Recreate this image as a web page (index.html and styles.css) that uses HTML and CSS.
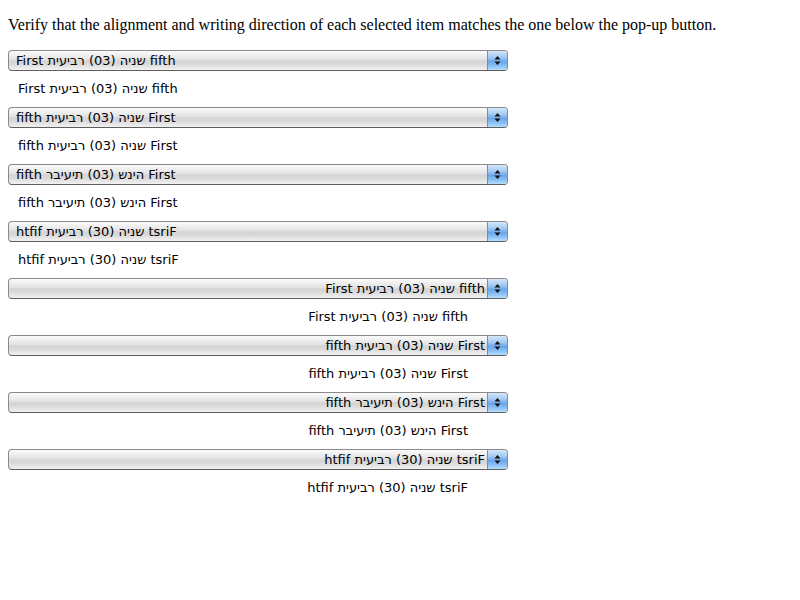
FILE: index.html
```html
<!DOCTYPE html>
<html>
<head>
<meta charset="utf-8">
<link rel="stylesheet" href="styles.css">
</head>
<body>
<p class="intro">Verify that the alignment and writing direction of each selected item matches the one below the pop-up button.</p>

<div class="popup"><div class="val left ltr">First שניה (03) רביעית fifth</div><div class="arrows"><svg width="7" height="11" viewBox="0 0 7 11"><path d="M3.5 1 L6.5 4.5 L0.5 4.5 Z M0.5 6.5 L6.5 6.5 L3.5 10 Z" fill="#111"/></svg></div></div>
<div class="echo left ltr">First שניה (03) רביעית fifth</div>

<div class="popup"><div class="val left rtl">First שניה (03) רביעית fifth</div><div class="arrows"><svg width="7" height="11" viewBox="0 0 7 11"><path d="M3.5 1 L6.5 4.5 L0.5 4.5 Z M0.5 6.5 L6.5 6.5 L3.5 10 Z" fill="#111"/></svg></div></div>
<div class="echo left rtl">First שניה (03) רביעית fifth</div>

<div class="popup"><div class="val left ovl">fifth רביעית (03) שניה First</div><div class="arrows"><svg width="7" height="11" viewBox="0 0 7 11"><path d="M3.5 1 L6.5 4.5 L0.5 4.5 Z M0.5 6.5 L6.5 6.5 L3.5 10 Z" fill="#111"/></svg></div></div>
<div class="echo left ovl">fifth רביעית (03) שניה First</div>

<div class="popup"><div class="val left ovr">First שניה (03) רביעית fifth</div><div class="arrows"><svg width="7" height="11" viewBox="0 0 7 11"><path d="M3.5 1 L6.5 4.5 L0.5 4.5 Z M0.5 6.5 L6.5 6.5 L3.5 10 Z" fill="#111"/></svg></div></div>
<div class="echo left ovr">First שניה (03) רביעית fifth</div>

<div class="popup"><div class="val right ltr">First שניה (03) רביעית fifth</div><div class="arrows"><svg width="7" height="11" viewBox="0 0 7 11"><path d="M3.5 1 L6.5 4.5 L0.5 4.5 Z M0.5 6.5 L6.5 6.5 L3.5 10 Z" fill="#111"/></svg></div></div>
<div class="echo right ltr">First שניה (03) רביעית fifth</div>

<div class="popup"><div class="val right rtl">First שניה (03) רביעית fifth</div><div class="arrows"><svg width="7" height="11" viewBox="0 0 7 11"><path d="M3.5 1 L6.5 4.5 L0.5 4.5 Z M0.5 6.5 L6.5 6.5 L3.5 10 Z" fill="#111"/></svg></div></div>
<div class="echo right rtl">First שניה (03) רביעית fifth</div>

<div class="popup"><div class="val right ovl">fifth רביעית (03) שניה First</div><div class="arrows"><svg width="7" height="11" viewBox="0 0 7 11"><path d="M3.5 1 L6.5 4.5 L0.5 4.5 Z M0.5 6.5 L6.5 6.5 L3.5 10 Z" fill="#111"/></svg></div></div>
<div class="echo right ovl">fifth רביעית (03) שניה First</div>

<div class="popup"><div class="val right ovr">First שניה (03) רביעית fifth</div><div class="arrows"><svg width="7" height="11" viewBox="0 0 7 11"><path d="M3.5 1 L6.5 4.5 L0.5 4.5 Z M0.5 6.5 L6.5 6.5 L3.5 10 Z" fill="#111"/></svg></div></div>
<div class="echo right ovr">First שניה (03) רביעית fifth</div>
</body>
</html>
```

FILE: styles.css
```css
body {
  margin: 0;
  padding: 8px;
  background: #fff;
  color: #000;
  font-family: "Liberation Serif", serif;
  font-size: 16px;
}

.intro {
  margin: 8px 0 16px;
  line-height: 18px;
}

.popup {
  display: flex;
  width: 500px;
  height: 21px;
  box-sizing: border-box;
  border: 1px solid #8a8a8a;
  border-bottom-color: #5e5e5e;
  border-radius: 4px;
  overflow: hidden;
  background: linear-gradient(#fbfbfb 0%, #f0f0f0 20%, #e2e2e2 45%, #d4d4d4 52%, #dadada 70%, #f2f2f2 100%);
  font-family: "DejaVu Sans", sans-serif;
  font-size: 13px;
}

.val {
  flex: 1;
  min-width: 0;
  padding: 0 2px 0 7px;
  line-height: 19px;
  white-space: nowrap;
}

.arrows {
  width: 19px;
  flex: none;
  border-left: 1px solid #6e8fb9;
  background: linear-gradient(#d3e6fa 0%, #a9cdf3 30%, #7fb3ec 48%, #6aa5ea 55%, #8cc2f4 80%, #b6e0fd 100%);
  display: flex;
  align-items: center;
  justify-content: center;
}

.arrows svg {
  display: block;
}

.echo {
  width: 500px;
  box-sizing: border-box;
  padding: 10px;
  line-height: 16px;
  white-space: nowrap;
  font-family: "DejaVu Sans", sans-serif;
  font-size: 13px;
}

.echo.right {
  padding-right: 40px;
}

.left { text-align: left; }
.right { text-align: right; }

.ltr { direction: ltr; }
.rtl { direction: rtl; }
.ovl { direction: ltr; unicode-bidi: bidi-override; }
.ovr { direction: rtl; unicode-bidi: bidi-override; }
```
